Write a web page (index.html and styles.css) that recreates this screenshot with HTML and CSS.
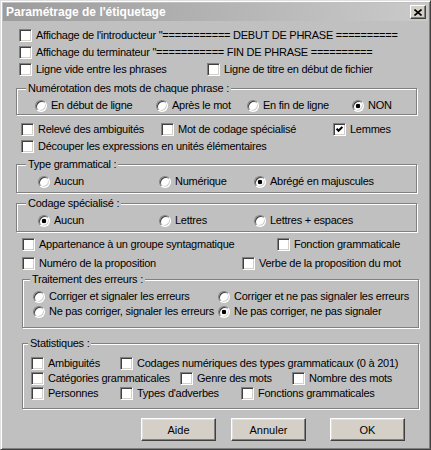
FILE: index.html
```html
<!DOCTYPE html>
<html lang="fr">
<head>
  <meta charset="UTF-8">
  <title>Paramétrage de l'étiquetage</title>
  <link rel="stylesheet" href="styles.css">
</head>
<body>
  <div class="dialog">
    <div class="titlebar">
      <span class="title">Paramétrage de l'étiquetage</span>
      <span class="close">
        <svg width="8" height="7" viewBox="0 0 8 7"><path d="M0.5 0.5 L7.5 6.5 M7.5 0.5 L0.5 6.5" stroke="#000" stroke-width="1.6"/></svg>
      </span>
    </div>

    <div class="row row-top first">
      <label class="opt"><span class="check"></span>Affichage de l'introducteur "=========== DEBUT DE PHRASE ==========</label>
    </div>
    <div class="row row-top">
      <label class="opt"><span class="check"></span>Affichage du terminateur "=========== FIN DE PHRASE ==========</label>
    </div>
    <div class="row row-top">
      <label class="opt w188"><span class="check"></span>Ligne vide entre les phrases</label>
      <label class="opt"><span class="check"></span>Ligne de titre en début de fichier</label>
    </div>

    <div class="group group-num">
      <span class="legend">Numérotation des mots de chaque phrase :</span>
      <div class="row">
        <label class="opt w121"><span class="radio"></span>En début de ligne</label>
        <label class="opt w91"><span class="radio"></span>Après le mot</label>
        <label class="opt w105"><span class="radio"></span>En fin de ligne</label>
        <label class="opt"><span class="radio on"></span>NON</label>
      </div>
    </div>

    <div class="row row-mid gap8">
      <label class="opt w140"><span class="check"></span>Relevé des ambiguités</label>
      <label class="opt w172"><span class="check"></span>Mot de codage spécialisé</label>
      <label class="opt"><span class="check on"><svg width="7" height="7" viewBox="0 0 7 7"><polyline points="0.6,2.8 2.5,4.8 6.4,0.9" fill="none" stroke="#000" stroke-width="2"/></svg></span>Lemmes</label>
    </div>
    <div class="row row-mid">
      <label class="opt"><span class="check"></span>Découper les expressions en unités élémentaires</label>
    </div>

    <div class="group group-type">
      <span class="legend">Type grammatical :</span>
      <div class="row">
        <label class="opt w121"><span class="radio"></span>Aucun</label>
        <label class="opt w95"><span class="radio"></span>Numérique</label>
        <label class="opt"><span class="radio on"></span>Abrégé en majuscules</label>
      </div>
    </div>

    <div class="group group-code">
      <span class="legend">Codage spécialisé :</span>
      <div class="row">
        <label class="opt w121"><span class="radio on"></span>Aucun</label>
        <label class="opt w95"><span class="radio"></span>Lettres</label>
        <label class="opt"><span class="radio"></span>Lettres + espaces</label>
      </div>
    </div>

    <div class="row row-low gap6">
      <label class="opt w255"><span class="check"></span>Appartenance à un groupe syntagmatique</label>
      <label class="opt"><span class="check"></span>Fonction grammaticale</label>
    </div>
    <div class="row row-low gap6">
      <label class="opt w220"><span class="check"></span>Numéro de la proposition</label>
      <label class="opt"><span class="check"></span>Verbe de la proposition du mot</label>
    </div>

    <div class="group group-err">
      <span class="legend">Traitement des erreurs :</span>
      <div class="row">
        <label class="opt w185"><span class="radio"></span>Corriger et signaler les erreurs</label>
        <label class="opt"><span class="radio"></span>Corriger et ne pas signaler les erreurs</label>
      </div>
      <div class="row">
        <label class="opt w185"><span class="radio"></span>Ne pas corriger, signaler les erreurs</label>
        <label class="opt"><span class="radio on"></span>Ne pas corriger, ne pas signaler</label>
      </div>
    </div>

    <div class="group group-stats">
      <span class="legend">Statistiques :</span>
      <div class="row">
        <label class="opt w89"><span class="check"></span>Ambiguités</label>
        <label class="opt"><span class="check"></span>Codages numériques des types grammaticaux (0 à 201)</label>
      </div>
      <div class="row">
        <label class="opt w149"><span class="check"></span>Catégories grammaticales</label>
        <label class="opt w112"><span class="check"></span>Genre des mots</label>
        <label class="opt"><span class="check"></span>Nombre des mots</label>
      </div>
      <div class="row">
        <label class="opt w89"><span class="check"></span>Personnes</label>
        <label class="opt w121"><span class="check"></span>Types d'adverbes</label>
        <label class="opt"><span class="check"></span>Fonctions grammaticales</label>
      </div>
    </div>

    <div class="buttons">
      <button class="btn btn-help">Aide</button>
      <button class="btn btn-cancel">Annuler</button>
      <button class="btn">OK</button>
    </div>
  </div>
</body>
</html>
```

FILE: styles.css
```css
body {
  margin: 0;
  background-color: #c0c0c0;
  font-family: 'Liberation Sans', Arial, sans-serif;
  font-size: 11px;
  color: #000;
}

.dialog {
  box-sizing: border-box;
  width: 431px;
  height: 450px;
  padding: 2px;
  background-color: #c0c0c0;
  border: 1px solid;
  border-color: #dfdfdf #404040 #404040 #dfdfdf;
  box-shadow: inset 1px 1px #fff, inset -1px -1px #808080;
}

/* barre de titre */
.titlebar {
  height: 18px;
  display: flex;
  align-items: center;
  justify-content: space-between;
  padding: 0 2px 0 3px;
  background: linear-gradient(to right, #9c9c9c, #cacaca);
}

.title {
  color: #fff;
  font-weight: bold;
  font-size: 12px;
}

.close {
  box-sizing: border-box;
  width: 16px;
  height: 14px;
  display: flex;
  align-items: center;
  justify-content: center;
  background-color: #d4d0c8;
  border: 1px solid;
  border-color: #fff #404040 #404040 #fff;
  box-shadow: inset -1px -1px #808080;
}

/* lignes d'options */
.row {
  display: flex;
  align-items: center;
  height: 13px;
}

.row-top { padding-left: 16px; margin-top: 4px; }
.row-top.first { margin-top: 8px; }
.row-mid { padding-left: 18px; margin-top: 4px; }
.row-low { padding-left: 19px; }
.gap8 { margin-top: 8px; }
.gap6 { margin-top: 6px; }

.opt {
  display: flex;
  align-items: center;
  gap: 4px;
  flex-shrink: 0;
  white-space: nowrap;
  line-height: 13px;
  letter-spacing: -0.25px;
}

.w89 { width: 89px; }
.w91 { width: 91px; }
.w95 { width: 95px; }
.w105 { width: 105px; }
.w112 { width: 112px; }
.w121 { width: 121px; }
.w140 { width: 140px; }
.w149 { width: 149px; }
.w172 { width: 172px; }
.w185 { width: 185px; }
.w188 { width: 188px; }
.w220 { width: 220px; }
.w255 { width: 255px; }

.check {
  box-sizing: border-box;
  width: 13px;
  height: 13px;
  flex-shrink: 0;
  display: flex;
  align-items: center;
  justify-content: center;
  background-color: #fff;
  border: 1px solid;
  border-color: #808080 #fff #fff #808080;
  box-shadow: inset 1px 1px #404040, inset -1px -1px #d4d0c8;
}

.radio {
  box-sizing: border-box;
  width: 12px;
  height: 12px;
  flex-shrink: 0;
  border-radius: 50%;
  background-color: #fff;
  border: 1px solid;
  border-color: #808080 #fff #fff #808080;
  box-shadow: inset 1px 1px #404040, inset -1px -1px #d4d0c8;
}

.radio.on {
  background: radial-gradient(circle, #000 2px, #fff 2.6px);
}

/* cadres */
.group {
  position: relative;
  display: flex;
  flex-direction: column;
  gap: 2px;
  border: 1px solid #808080;
  box-shadow: inset 1px 1px #fff, 1px 1px #fff;
}

.legend {
  position: absolute;
  top: -7px;
  left: 9px;
  padding: 0 2px;
  line-height: 13px;
  letter-spacing: -0.25px;
  white-space: nowrap;
  background-color: #c0c0c0;
}

.group-num {
  width: 401px;
  box-sizing: border-box;
  margin: 12px 0 0 13px;
  padding: 10px 0 2px 18px;
}

.group-type,
.group-code {
  width: 401px;
  box-sizing: border-box;
  margin-left: 13px;
  padding: 10px 0 4px 21px;
}

.group-type { margin-top: 11px; }
.group-code { margin-top: 10px; }

.group-err,
.group-stats {
  width: 397px;
  box-sizing: border-box;
  margin-left: 19px;
}

.group-err {
  margin-top: 9px;
  padding: 10px 0 9px 10px;
}

.group-stats {
  margin-top: 15px;
  padding: 13px 0 8px 8px;
}

.group-err .legend { left: 7px; }
.group-stats .legend { left: 5px; }

/* boutons */
.buttons {
  display: flex;
  margin: 9px 0 0 138px;
}

.btn {
  box-sizing: border-box;
  width: 75px;
  height: 23px;
  padding: 0;
  font-family: 'Liberation Sans', Arial, sans-serif;
  font-size: 11px;
  color: #000;
  background-color: #d4d0c8;
  border: 1px solid;
  border-color: #fff #404040 #404040 #fff;
  box-shadow: inset -1px -1px #808080, inset 1px 1px #dfdfdf;
}

.btn-help { margin-right: 15px; }
.btn-cancel { margin-right: 24px; }
```
